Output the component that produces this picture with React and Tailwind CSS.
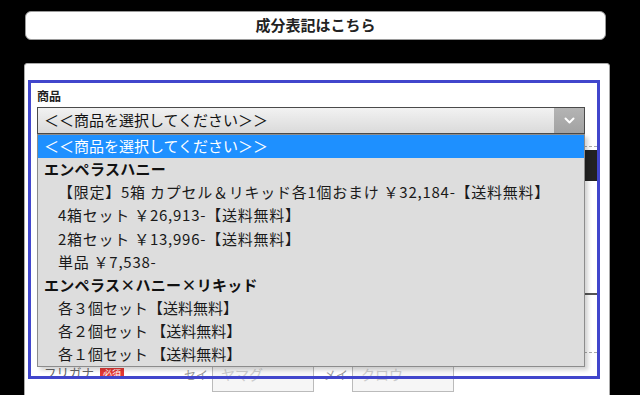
import React from "react";

const groups = [
  {
    label: "エンペラスハニー",
    wide: true,
    items: [
      "【限定】5箱 カプセル＆リキッド各1個おまけ ￥32,184-【送料無料】",
      "4箱セット ￥26,913-【送料無料】",
      "2箱セット ￥13,996-【送料無料】",
      "単品 ￥7,538-",
    ],
  },
  {
    label: "エンペラス×ハニー×リキッド",
    wide: false,
    items: ["各３個セット【送料無料】", "各２個セット 【送料無料】", "各１個セット 【送料無料】"],
  },
];

function Chevron() {
  return (
    <svg width="11" height="7" viewBox="0 0 11 7" fill="none" stroke="#fff" strokeWidth="2" strokeLinecap="round" strokeLinejoin="round">
      <polyline points="1.5 1.5 5.5 5.5 9.5 1.5" />
    </svg>
  );
}

function ProductSelect() {
  return (
    <div className="flex h-[27px] w-[548px] border border-[#4a4a4a] bg-gradient-to-b from-[#f2f2f2] to-[#dadada]">
      <div className="flex flex-1 items-center pl-[6px] text-[15px] text-[#111]">＜＜商品を選択してください＞＞</div>
      <div className="flex w-[30px] items-center justify-center bg-gradient-to-b from-[#b4b4b4] to-[#a2a2a2]">
        <Chevron />
      </div>
    </div>
  );
}

function DropdownList() {
  return (
    <div className="absolute left-[37px] top-[134px] w-[548px] border border-[#8c8c8c] bg-[#dddddd] shadow-[3px_3px_4px_rgba(0,0,0,0.18)] text-[15px] text-[#1a1a1a]">
      <div className="flex h-[23px] items-center bg-[#1e90ff] pl-[6px] text-white">＜＜商品を選択してください＞＞</div>
      {groups.map((g) => (
        <div key={g.label}>
          <div className="flex h-[23.1px] items-center pl-[6px] font-bold tracking-[0.3px] text-[#111]">{g.label}</div>
          {g.items.map((it) => (
            <div key={it} className={g.wide ? "flex h-[23.1px] items-center whitespace-pre pl-[20px] tracking-[0.75px]" : "flex h-[23.1px] items-center whitespace-pre pl-[20px]"}>
              {it}
            </div>
          ))}
        </div>
      ))}
    </div>
  );
}

export default function App() {
  return (
    <div className="relative h-[395px] w-[640px] overflow-hidden bg-black font-['Noto_Sans_CJK_JP','Noto_Sans',sans-serif]">
      <div className="px-[25px] pt-[11px]">
        <div className="flex h-[29px] w-[581px] items-center justify-center rounded-[6px] border border-[#9a9a9a] bg-white text-[15px] font-bold text-[#222]">
          成分表記はこちら
        </div>
      </div>

      <div className="ml-[24px] mt-[23px] h-[340px] w-[586px] rounded-t-[3px] border border-[#aaa] bg-white pl-[12px]">
        <div className="pt-[24px] text-[12px] font-bold leading-[16px] text-[#222]">商品</div>
        <div className="mt-[3px]">
          <ProductSelect />
        </div>

        <div className="mt-[12px] w-[560px] border-t border-dashed border-[#aaa] pt-[3px]">
          <div className="ml-auto h-[31px] w-[150px] bg-[#222]" />
          <div className="mt-[112px] w-[560px] border-t-2 border-[#555]" />
          <div className="mt-[57px] w-[560px] border-t border-dashed border-[#aaa]" />
          <div className="flex items-start pl-[7px] pt-[7px]">
            <div className="flex items-center gap-[6px] pt-[4px]">
              <span className="text-[12.5px] text-[#666]">フリガナ</span>
              <span className="bg-[#e53935] px-[3px] text-[9px] leading-[11px] text-white">必須</span>
            </div>
            <span className="ml-[60px] pt-[6px] text-[12px] text-[#999]">セイ</span>
            <div className="ml-[4px] h-[32px] w-[102px] border border-[#bbb] bg-[#f6f6f6] pl-[8px] pt-[3px] text-[14px] text-[#ccc]">ヤマグ</div>
            <span className="ml-[10px] pt-[6px] text-[12px] text-[#999]">メイ</span>
            <div className="ml-[4px] h-[32px] w-[102px] border border-[#bbb] bg-[#f6f6f6] pl-[8px] pt-[3px] text-[14px] text-[#ccc]">クロウ</div>
          </div>
        </div>
      </div>

      <div className="pointer-events-none absolute left-[28px] top-[80px] h-[299px] w-[572px] border-[3px] border-[#4146cc]" />

      <DropdownList />
    </div>
  );
}
